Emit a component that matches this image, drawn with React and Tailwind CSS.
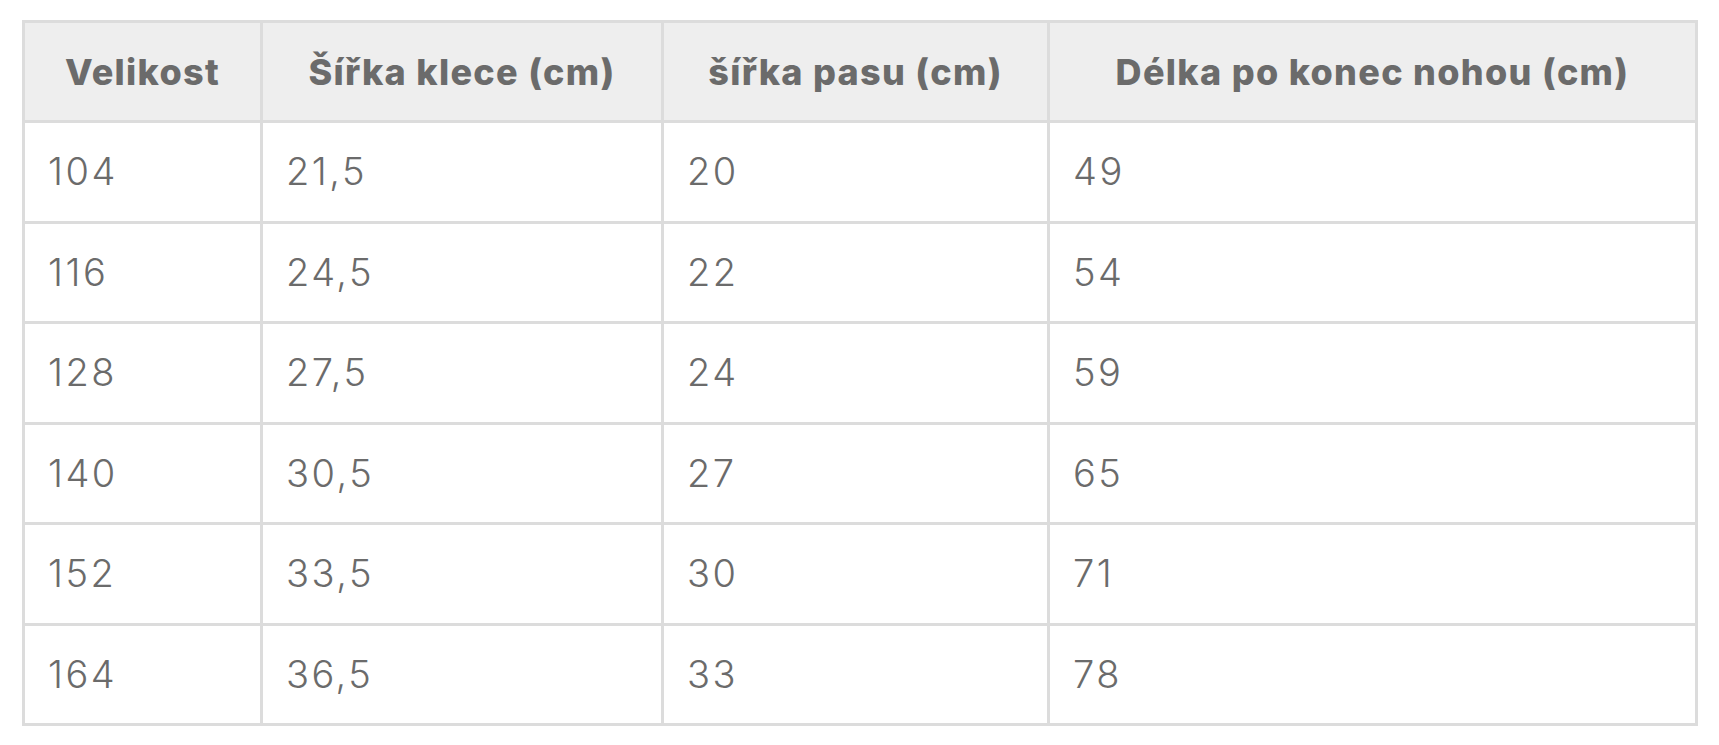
import React from "react";

const headers = ["Velikost", "Šířka klece (cm)", "šířka pasu (cm)", "Délka po konec nohou (cm)"];

const rows = [
  ["104", "21,5", "20", "49"],
  ["116", "24,5", "22", "54"],
  ["128", "27,5", "24", "59"],
  ["140", "30,5", "27", "65"],
  ["152", "33,5", "30", "71"],
  ["164", "36,5", "33", "78"],
];

const colWidths = ["w-[238px]", "w-[401px]", "w-[386px]", "w-[648px]"];

export default function App() {
  return (
    <div className="bg-white min-h-[745px] pt-[20px] pl-[22px] font-['Inter',sans-serif] text-[#6b6b6b]">
      <table className="table-fixed border-collapse border-[3px] border-[#dcdcdc] w-[1675px]">
        <colgroup>
          {colWidths.map((w, i) => (
            <col key={i} className={w} />
          ))}
        </colgroup>
        <thead>
          <tr className="h-[100px] bg-[#eeeeee]">
            {headers.map((h, i) => (
              <th
                key={i}
                className="border-[3px] border-[#dcdcdc] text-center font-extrabold text-[36px] tracking-[1.3px] px-2 whitespace-nowrap"
              >
                {h}
              </th>
            ))}
          </tr>
        </thead>
        <tbody>
          {rows.map((r, i) => (
            <tr key={i} className="h-[100.5px]">
              {r.map((c, j) => (
                <td
                  key={j}
                  className="border-[3px] border-[#dcdcdc] text-left pl-[23px] font-light text-[38px] tracking-[2.5px]"
                >
                  {c}
                </td>
              ))}
            </tr>
          ))}
        </tbody>
      </table>
    </div>
  );
}
